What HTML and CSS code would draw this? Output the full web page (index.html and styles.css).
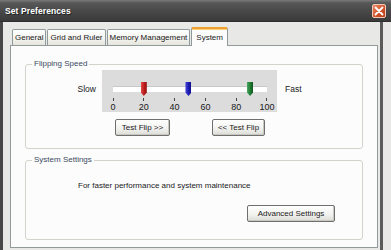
FILE: index.html
```html
<!DOCTYPE html>
<html lang="en">
<head>
    <meta charset="UTF-8">
    <meta name="viewport" content="width=device-width, initial-scale=1.0">
    <title>Set Preferences</title>
    <link rel="stylesheet" href="styles.css">
</head>
<body>
    <div class="window">
        <div class="titlebar">
            <span class="title">Set Preferences</span>
            <span class="close-btn" title="Close">
                <svg width="10" height="10" viewBox="0 0 10 10">
                    <path d="M1.5 1.5 L8.5 8.5 M8.5 1.5 L1.5 8.5" stroke="#fff" stroke-width="1.8" stroke-linecap="round"/>
                </svg>
            </span>
        </div>

        <div class="frame">
            <div class="client">
                <div class="tabs">
                    <div class="tab">General</div>
                    <div class="tab">Grid and Ruler</div>
                    <div class="tab">Memory Management</div>
                    <div class="tab active">System</div>
                </div>

                <div class="panel">
                    <fieldset class="group group-speed">
                        <legend>Flipping Speed</legend>
                        <div class="speed-row">
                            <span class="end-label slow">Slow</span>
                            <div class="slider">
                                <div class="track">
                                    <span class="thumb thumb-red" style="left: 20%"></span>
                                    <span class="thumb thumb-blue" style="left: 49%"></span>
                                    <span class="thumb thumb-green" style="left: 89%"></span>
                                </div>
                                <div class="ticks">
                                    <span class="tick"></span><span class="tick"></span><span class="tick"></span>
                                    <span class="tick"></span><span class="tick"></span><span class="tick"></span>
                                </div>
                                <div class="tick-labels">
                                    <span>0</span><span>20</span><span>40</span>
                                    <span>60</span><span>80</span><span>100</span>
                                </div>
                            </div>
                            <span class="end-label">Fast</span>
                        </div>
                        <div class="flip-buttons">
                            <button class="btn btn-flip">Test Flip &gt;&gt;</button>
                            <button class="btn btn-flip back">&lt;&lt; Test Flip</button>
                        </div>
                    </fieldset>

                    <fieldset class="group group-settings">
                        <legend>System Settings</legend>
                        <p class="settings-text">For faster performance and system maintenance</p>
                        <div class="settings-actions">
                            <button class="btn btn-advanced">Advanced Settings</button>
                        </div>
                    </fieldset>
                </div>
            </div>
            <div class="frame-edge"></div>
        </div>
    </div>
</body>
</html>
```

FILE: styles.css
```css
:root {
    --face: #e8e8e6;
    --panel: #fcfcfd;
    --tab-border: #919b9c;
    --group-border: #d3d3cc;
    --text: #1a1a1a;
    --legend: #3b4a60;
}

body {
    margin: 0;
    font-family: 'Liberation Sans', Arial, sans-serif;
    font-size: 8px;
    color: var(--text);
    background: var(--face);
}

.window {
    width: 391px;
    height: 250px;
    overflow: hidden;
    display: flex;
    flex-direction: column;
}

/* title bar */

.titlebar {
    height: 22px;
    flex: none;
    display: flex;
    align-items: center;
    justify-content: space-between;
    padding: 0 5px 0 5px;
    background: linear-gradient(#7a7a7a 0, #575757 3px, #474747 12px, #3a3a3a 100%);
    border-bottom: 1px solid #2e2e2e;
    box-sizing: border-box;
}

.title {
    color: #fff;
    font-weight: bold;
    font-size: 8.5px;
    letter-spacing: 0.1px;
    text-shadow: 1px 1px 0 #222;
}

.close-btn {
    width: 14px;
    height: 14px;
    display: flex;
    align-items: center;
    justify-content: center;
    border: 1px solid #f0c8b8;
    border-radius: 2px;
    background: linear-gradient(135deg, #e98a66, #cf4f28 60%, #b8401d);
    box-sizing: border-box;
    margin-right: 0;
}

/* frame and client area */

.frame {
    flex: 1;
    display: flex;
    border-left: 3px solid #474747;
    background: var(--face);
}

.client {
    padding: 5px 0 0 7px;
    width: 376px;
    box-sizing: border-box;
}

.frame-edge {
    width: 3px;
    margin-left: 1px;
    background: #5b5b5b;
}

/* tabs */

.tabs {
    display: flex;
    align-items: flex-end;
    gap: 1px;
    padding-left: 2px;
    height: 18px;
}

.tab {
    height: 16px;
    line-height: 15px;
    padding: 0 2px;
    border: 1px solid var(--tab-border);
    border-bottom: none;
    border-radius: 2px 2px 0 0;
    background: linear-gradient(#ffffff, #f3f3ef 60%, #e4e4dc);
    box-sizing: border-box;
    white-space: nowrap;
}

.tab.active {
    height: 19px;
    margin: 0 -1px -1px 0;
    padding: 0 4px;
    line-height: 17px;
    background: var(--panel);
    border-top: 2px solid #f0a030;
    box-shadow: inset 0 1px 0 #ffd27a;
    position: relative;
}

.panel {
    width: 368px;
    height: 203px;
    box-sizing: border-box;
    border: 1px solid var(--tab-border);
    background: var(--panel);
    padding: 0 14px;
}

/* group boxes */

.group {
    margin: 13px 0 0 0;
    padding: 0;
    border: 1px solid var(--group-border);
    border-radius: 3px;
    width: 338px;
    box-sizing: border-box;
}

.group legend {
    margin-left: 6px;
    padding: 0 2px;
    line-height: 10px;
    color: var(--legend);
}

.group-speed {
    height: 90px;
}

.group-settings {
    margin-top: 6px;
    height: 85px;
}

/* speed slider */

.speed-row {
    display: grid;
    grid-template-columns: 70px 175px auto;
    column-gap: 6px;
    margin-top: 1px;
}

.end-label {
    margin-top: 14px;
    line-height: 10px;
    font-size: 8.5px;
}

.end-label.slow {
    text-align: right;
}

.speed-row .end-label:last-child {
    margin-left: 2px;
}

.slider {
    height: 42px;
    background: #dcdcdc;
}

.track {
    position: relative;
    margin: 16px 0 0 11px;
    width: 154px;
    height: 6px;
    background: #fff;
    border-top: 1px solid #c8c8c8;
    box-sizing: border-box;
}

.thumb {
    position: absolute;
    top: -5px;
    width: 6px;
    height: 14px;
    transform: translateX(-50%);
    clip-path: polygon(0 0, 100% 0, 100% 75%, 50% 100%, 0 75%);
}

.thumb-red {
    background: linear-gradient(90deg, #e24a4a, #b71818 60%, #8e1010);
}

.thumb-blue {
    background: linear-gradient(90deg, #4a4ae0, #1c1cb0 60%, #10108a);
}

.thumb-green {
    background: linear-gradient(90deg, #46a35a, #1c7a30 60%, #115520);
}

.ticks,
.tick-labels {
    display: flex;
    justify-content: space-between;
    width: 166px;
    margin-left: 5px;
}

.ticks {
    margin-top: 6px;
    height: 3px;
}

.tick {
    width: 12px;
    display: flex;
    justify-content: center;
}

.tick::before {
    content: "";
    width: 1px;
    height: 3px;
    background: #444;
}

.tick-labels {
    margin-top: 1px;
    line-height: 11px;
    font-size: 9px;
}

.tick-labels span {
    width: 12px;
    display: flex;
    justify-content: center;
    white-space: nowrap;
}

/* buttons */

.btn {
    font-family: inherit;
    font-size: 8px;
    color: var(--text);
    height: 17px;
    padding: 0;
    border: 1px solid #6f6f6f;
    border-radius: 2px;
    background: linear-gradient(#ffffff, #f2f2ef 55%, #dcdcd6);
    box-shadow: inset -1px -1px 0 #c8c8c0;
    cursor: pointer;
}

.flip-buttons {
    display: flex;
    gap: 42px;
    margin: 7px 0 0 89px;
}

.btn-flip {
    width: 55px;
}

.btn-flip.back {
    width: 53px;
}

.settings-text {
    margin: 16px 0 0 52px;
    line-height: 10px;
}

.settings-actions {
    display: flex;
    justify-content: flex-end;
    margin: 14px 27px 0 0;
}

.btn-advanced {
    width: 88px;
}
```
